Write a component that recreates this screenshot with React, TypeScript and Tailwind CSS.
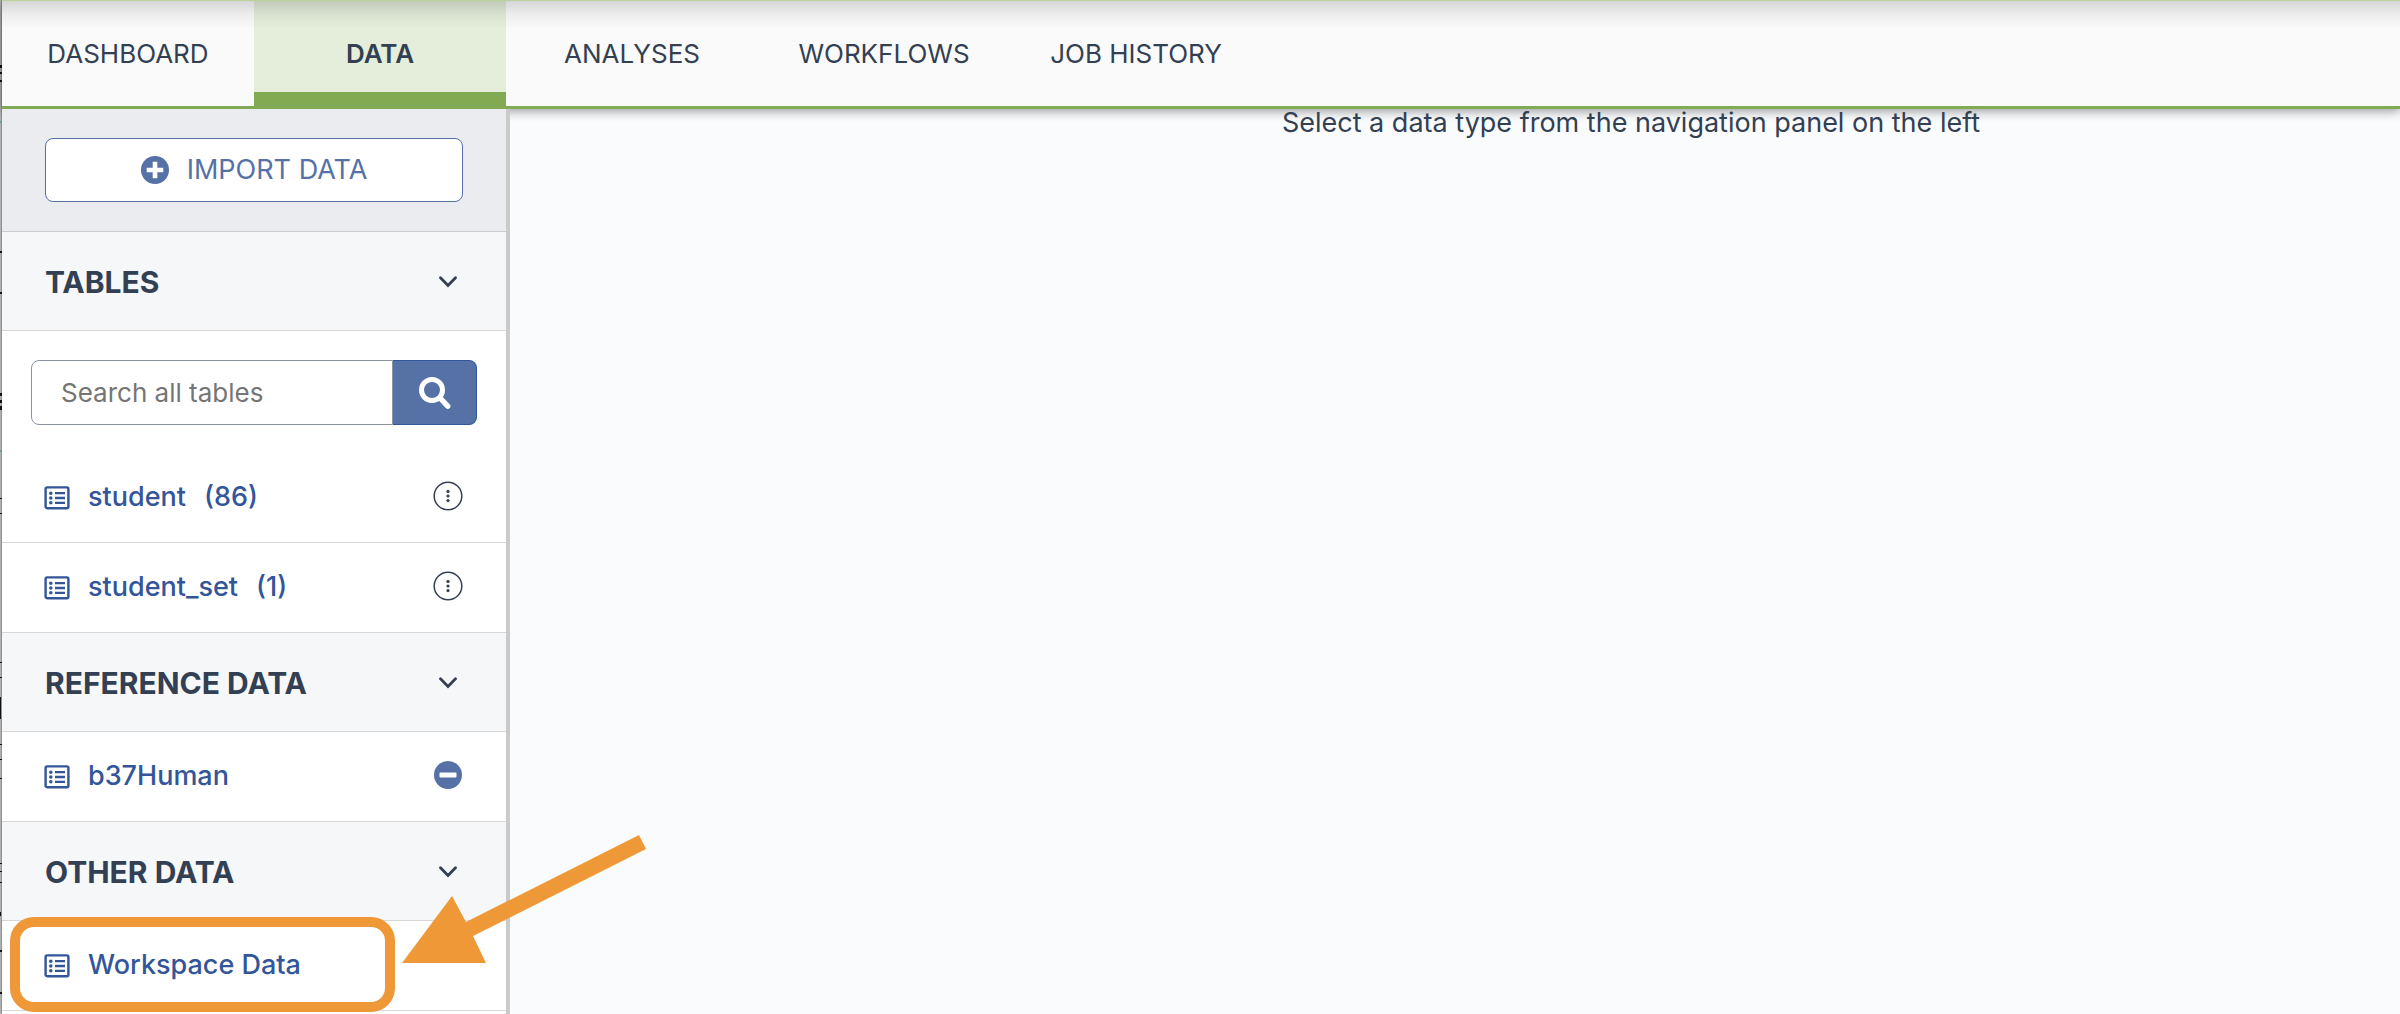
import { useState } from 'react'
import type { ReactNode } from 'react'

const tabs = ['DASHBOARD', 'DATA', 'ANALYSES', 'WORKFLOWS', 'JOB HISTORY']

function ListIcon() {
  return (
    <svg width="26" height="24" viewBox="0 0 26 24" fill="none" stroke="currentColor" aria-hidden="true">
      <rect x="1.6" y="1.4" width="22.8" height="20.8" rx="1.5" strokeWidth="2.4" />
      <path d="M11 7.2h10M11 12h10M11 16.8h10" strokeWidth="2.3" />
      <path d="M6.8 7.2h.01M6.8 12h.01M6.8 16.8h.01" strokeWidth="3.6" strokeLinecap="round" />
    </svg>
  )
}

function PlusCircleIcon() {
  return (
    <svg width="28" height="28" viewBox="0 0 28 28" aria-hidden="true">
      <circle cx="14" cy="14" r="14" fill="currentColor" />
      <path d="M14 8v12M8 14h12" stroke="#fff" strokeWidth="4.6" strokeLinecap="square" />
    </svg>
  )
}

function MinusCircleIcon() {
  return (
    <svg width="28" height="28" viewBox="0 0 28 28" aria-hidden="true">
      <circle cx="14" cy="14" r="14" fill="#5671a6" />
      <rect x="5.5" y="11.5" width="17" height="5" rx="1" fill="#fff" />
    </svg>
  )
}

function MenuCircleIcon() {
  return (
    <svg width="30" height="30" viewBox="0 0 30 30" fill="none" aria-hidden="true">
      <circle cx="15" cy="15" r="13.8" stroke="#333f52" strokeWidth="1.5" />
      <circle cx="15" cy="10.4" r="1.6" fill="#333f52" />
      <circle cx="15" cy="15" r="1.6" fill="#333f52" />
      <circle cx="15" cy="19.6" r="1.6" fill="#333f52" />
    </svg>
  )
}

function SearchIcon() {
  return (
    <svg width="32" height="32" viewBox="0 0 32 32" fill="none" stroke="#fff" aria-hidden="true">
      <circle cx="13" cy="13" r="10.5" strokeWidth="5" />
      <path d="M21.5 21.5l7.2 7.7" strokeWidth="5.4" strokeLinecap="round" />
    </svg>
  )
}

function ChevronIcon() {
  return (
    <svg width="18" height="12" viewBox="0 0 18 12" fill="none" aria-hidden="true">
      <path d="M1.5 1.8L9 9.4l7.5-7.6" stroke="#333f52" strokeWidth="2.8" strokeLinecap="round" />
    </svg>
  )
}

// Sliver of the dimmed page that shows along the left edge
function EdgeStrip() {
  return (
    <svg width="2" height="1014" viewBox="0 0 2 1014" className="absolute top-0 left-0" aria-hidden="true">
      <path d="M.5 0v1014" stroke="#b0b0b0" />
      <path d="M1.5 0v1014" stroke="#929292" />
      <path
        d="M0 65h2v3H0zM0 72h2v2H0zM0 80h2v2H0zM0 251h2v2H0zM0 292h2v2H0zM0 393h2v3H0zM0 400h2v3H0zM0 406h2v4H0zM0 498h2v1H0zM0 513h2v1H0zM0 662h2v1H0zM0 677h2v1H0zM0 697h1v22H0zM0 744h2v1H0zM0 759h2v1H0zM0 778h2v1H0zM0 863h2v1H0zM0 871h2v1H0zM0 882h2v1H0zM0 912h1v4H0zM0 950h2v2H0zM0 992h2v2H0z"
        fill="#111"
      />
      <path d="M0 121h2v2H0zM0 450h2v2H0z" fill="#6f9c8f" />
    </svg>
  )
}

interface SectionProps {
  title: string
  children: ReactNode
}

function Section({ title, children }: SectionProps) {
  const [open, setOpen] = useState(true)

  return (
    <section>
      <h2>
        <button
          type="button"
          aria-expanded={open}
          onClick={() => setOpen(!open)}
          className="flex h-[99px] w-full items-center justify-between border-b border-[#d6d7d9] bg-[#f6f7f9] pt-0.5 pr-[49px] pl-[43px] text-[30px] font-bold"
        >
          {title}
          <ChevronIcon />
        </button>
      </h2>
      {open && children}
    </section>
  )
}

interface DataRowProps {
  name: string
  count?: number
  highlighted?: boolean
  action?: { label: string; icon: ReactNode }
}

function DataRow({ name, count, highlighted, action }: DataRowProps) {
  return (
    <div className="relative flex h-[90px] items-center justify-between border-b border-[#d6d7d9] pr-[43px] pl-[42px]">
      <a href="#" className="flex items-center gap-[18px] text-[27px] font-medium text-[#33559a]">
        <ListIcon />
        <span>{name}</span>
        {count !== undefined && <span>({count})</span>}
      </a>
      {action && (
        <button type="button" aria-label={action.label} className="flex w-[30px] justify-center pb-1">
          {action.icon}
        </button>
      )}
      {highlighted && (
        <>
          <div className="pointer-events-none absolute -top-1 left-2 h-[95px] w-[385px] rounded-3xl border-[10px] border-[#ef9837]" />
          <svg
            width="246"
            height="130"
            viewBox="0 0 246 130"
            className="pointer-events-none absolute -top-[87px] left-[400px]"
            aria-hidden="true"
          >
            <path d="M237 1l7 14L71 102l13 27H0L50 62l14 26z" fill="#ef9837" />
          </svg>
        </>
      )}
    </div>
  )
}

export default function App() {
  const [active, setActive] = useState('DATA')

  return (
    <div className="relative flex min-h-screen flex-col overflow-hidden bg-[#fafbfd] pl-0.5 font-[Inter,sans-serif] text-[#333f52]">
      <EdgeStrip />

      {/* Workspace tabs */}
      <nav className="relative flex h-[109px] border-t border-b-[3px] border-t-[#b9d39b] border-b-[#82aa52] bg-[#fafafa] shadow-[0_2px_10px_rgba(0,0,0,0.4)]">
        {tabs.map((tab) => (
          <button
            key={tab}
            type="button"
            onClick={() => setActive(tab)}
            className={
              tab === active
                ? 'w-[252px] border-b-[14px] border-[#82aa52] bg-[#e5eedb] pt-[14px] text-[26px] font-semibold'
                : 'w-[252px] text-[26px]'
            }
          >
            {tab}
          </button>
        ))}
        <div className="pointer-events-none absolute inset-x-0 top-0 h-7 bg-linear-to-b from-black/15 via-black/5 to-transparent" />
      </nav>

      <div className="flex flex-1">
        {/* Data types */}
        <aside className="relative z-10 w-[508px] shrink-0 border-r-4 border-[#cacaca] bg-white">
          <div className="border-b border-[#cacbcd] bg-[#ebecf0] px-[43px] py-[29px]">
            <button
              type="button"
              className="flex h-16 w-full items-center justify-center gap-[18px] rounded-lg border border-[#5671a6] bg-white text-[27px] text-[#5671a6]"
            >
              <PlusCircleIcon />
              IMPORT DATA
            </button>
          </div>

          <Section title="TABLES">
            <div className="flex h-[122px] items-start px-[29px] pt-[29px]">
              <input
                type="search"
                aria-label="Search all tables"
                placeholder="Search all tables"
                className="h-[65px] min-w-0 flex-1 rounded-l-lg border border-[#8c93a0] px-[29px] text-[26px] placeholder:text-[#757575]"
              />
              <button
                type="button"
                aria-label="Search"
                className="flex h-[65px] w-[84px] items-center justify-center rounded-r-lg border border-l-0 border-[#33559a] bg-[#5671a6]"
              >
                <SearchIcon />
              </button>
            </div>
            <DataRow name="student" count={86} action={{ label: 'student menu', icon: <MenuCircleIcon /> }} />
            <DataRow name="student_set" count={1} action={{ label: 'student_set menu', icon: <MenuCircleIcon /> }} />
          </Section>

          <Section title="REFERENCE DATA">
            <DataRow name="b37Human" action={{ label: 'Delete b37Human', icon: <MinusCircleIcon /> }} />
          </Section>

          <Section title="OTHER DATA">
            <DataRow name="Workspace Data" highlighted />
          </Section>
        </aside>

        <main className="relative flex-1 pl-[352px] text-center text-[27px] leading-7">
          Select a data type from the navigation panel on the left
        </main>
      </div>
    </div>
  )
}
